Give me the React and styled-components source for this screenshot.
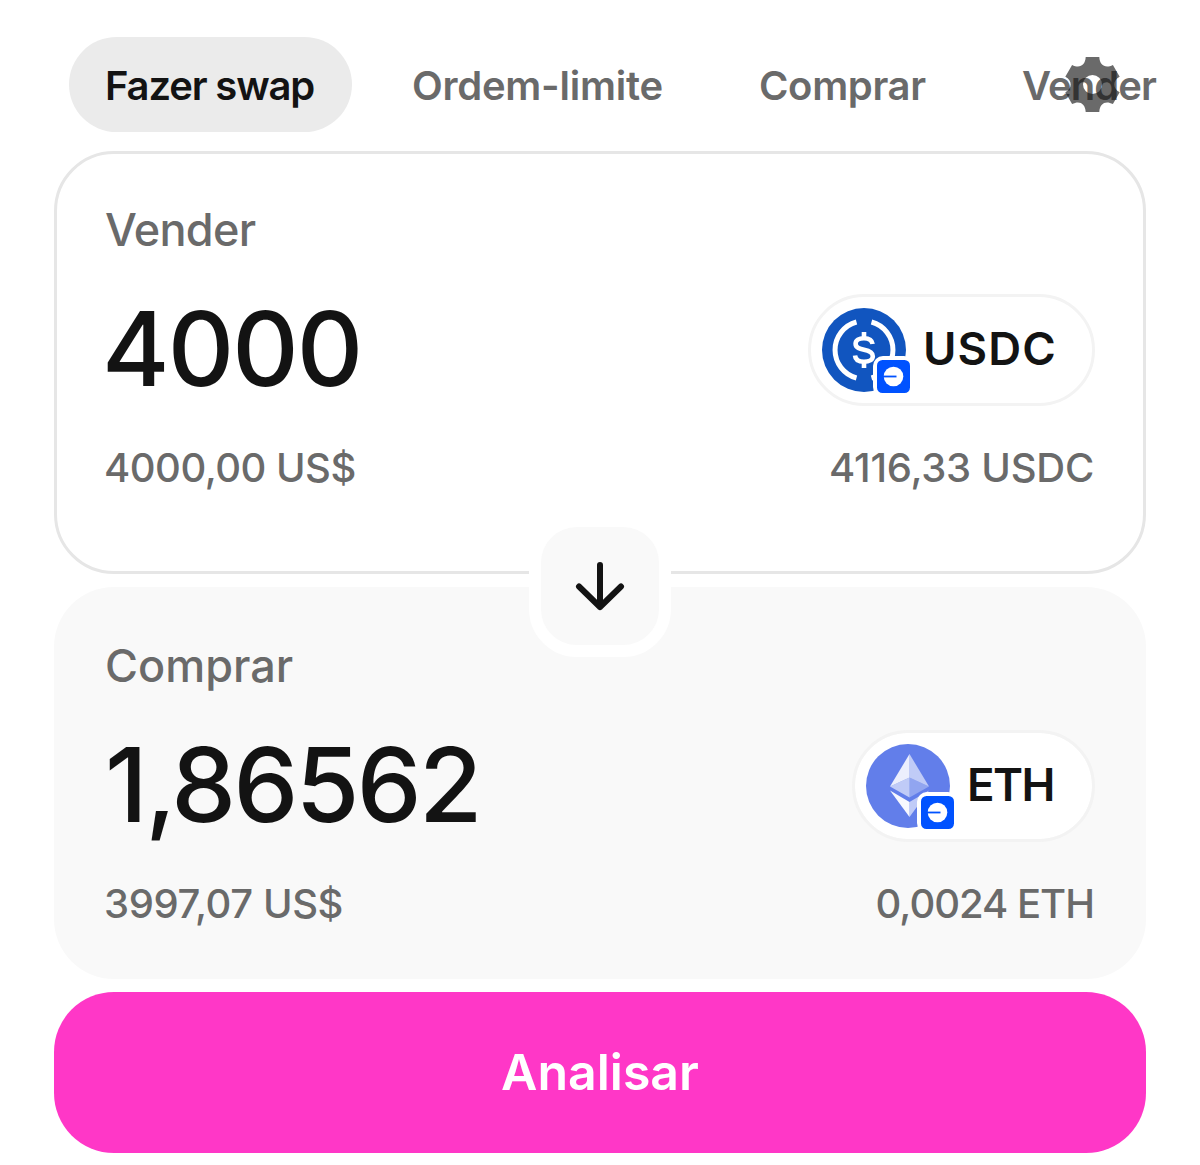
import React, { useState } from 'react';
import styled, { createGlobalStyle } from 'styled-components';

const GlobalStyle = createGlobalStyle`
    * {
        box-sizing: border-box;
    }
    body {
        margin: 0;
        background: #fff;
        overflow: hidden;
        font-family: Inter, 'Liberation Sans', sans-serif;
        color: #131313;
    }
    button {
        font-family: inherit;
        border: 0;
        margin: 0;
        padding: 0;
        cursor: pointer;
    }
`;

const Page = styled.main`
    width: 1200px;
    height: 1165px;
    padding: 37px 54px 0;
    overflow: hidden;
`;

const Header = styled.header`
    position: relative;
    height: 95px;
    margin-bottom: 19px;
`;

const Tabs = styled.nav`
    display: flex;
    gap: 24px;
    padding-left: 15px;
`;

const Tab = styled.button`
    flex: none;
    height: 95px;
    padding: 2px 0 0 36px;
    width: ${props => props.$width}px;
    text-align: left;
    white-space: nowrap;
    border-radius: 48px;
    background: ${props => (props.$active ? '#ebebeb' : 'transparent')};
    color: ${props => (props.$active ? '#131313' : '#6a6a6a')};
    font-size: 40px;
    font-weight: 600;
    letter-spacing: ${props => props.$spacing}px;
`;

//settings sits on top of the last tab
const SettingsButton = styled.button`
    position: absolute;
    top: 19px;
    right: 25px;
    width: 57px;
    height: 57px;
    background: transparent;
    svg {
        display: block;
    }
`;

const Card = styled.section`
    height: ${props => props.$height}px;
    padding: ${props => (props.$outlined ? '48px 48px 0' : '51px 51px 0')};
    border: ${props => (props.$outlined ? '3px solid #e6e6e6' : '0')};
    border-radius: 60px;
    background: ${props => (props.$outlined ? '#fff' : '#f9f9f9')};
`;

const Label = styled.div`
    height: 56px;
    line-height: 56px;
    font-size: 45px;
    font-weight: 450;
    color: #6a6a6a;
    letter-spacing: ${props => props.$spacing}px;
`;

const Row = styled.div`
    display: flex;
    align-items: center;
    justify-content: space-between;
    height: ${props => props.$height}px;
    margin-top: ${props => props.$top}px;
`;

const Amount = styled.div`
    margin-left: ${props => props.$indent}px;
    padding-bottom: 3px;
    font-size: 103px;
    line-height: 109px;
    font-weight: 500;
    letter-spacing: ${props => props.$spacing}px;
`;

const SubText = styled.span`
    font-size: 40px;
    line-height: 48px;
    font-weight: 450;
    color: #6a6a6a;
    white-space: nowrap;
    letter-spacing: ${props => props.$spacing}px;
    &:first-child {
        margin-left: -1px;
    }
    &:last-child {
        margin-right: 1px;
    }
`;

const TokenButton = styled.button`
    display: flex;
    align-items: center;
    gap: 17px;
    width: ${props => props.$width}px;
    height: 112px;
    padding-left: 11px;
    border: 3px solid #f3f3f3;
    border-radius: 56px;
    background: #fff;
    background-clip: padding-box;
    color: #131313;
`;

const Symbol = styled.span`
    padding-bottom: 4px;
    font-size: 45.5px;
    font-weight: 600;
    letter-spacing: ${props => props.$spacing}px;
`;

const TokenIcon = styled.span`
    position: relative;
    width: 84px;
    height: 84px;
    svg {
        display: block;
    }
`;

const NetworkBadge = styled.span`
    position: absolute;
    right: -7.5px;
    bottom: -5px;
    padding: 4px;
    border-radius: 10px;
    background: #fff;
`;

const Divider = styled.div`
    position: relative;
    height: 13px;
`;

const SwitchButton = styled.button`
    position: absolute;
    z-index: 1;
    left: 475px;
    top: -59px;
    display: flex;
    align-items: center;
    justify-content: center;
    width: 142px;
    height: 142px;
    border: 12px solid #fff;
    border-radius: 48px;
    background: #f9f9f9;
`;

const ReviewButton = styled.button`
    display: block;
    width: 100%;
    height: 161px;
    margin-top: 13px;
    padding-bottom: 2px;
    border-radius: 60px;
    background: #ff37c7;
    color: #fff;
    font-size: 50px;
    font-weight: 600;
`;

const GearIcon = () => (
    <svg width="57" height="57" viewBox="-28.5 -28.5 57 57">
        <path
            fill="#131313"
            fillOpacity=".63"
            fillRule="evenodd"
            d="M-6.8-27.5H6.8C7.2-19 13-15.8 20.4-19.6L27.2-7.8C20-4 20 4 27.2 7.8L20.4 19.6C13 15.8 7.2 19 6.8 27.5H-6.8C-7.2 19-13 15.8-20.4 19.6L-27.2 7.8C-20 4-20-4-27.2-7.8L-20.4-19.6C-13-15.8-7.2-19-6.8-27.5ZM0-9.5A9.5 9.5 0 1 0 0 9.5A9.5 9.5 0 1 0 0-9.5Z"
        />
    </svg>
);

const ArrowDown = () => (
    <svg width="50" height="50" viewBox="0 0 50 50" fill="none" stroke="#131313" strokeWidth="6" strokeLinecap="round" strokeLinejoin="round">
        <path d="M25 4V46M4 25.5L25 46L46 25.5" />
    </svg>
);

const BaseIcon = () => (
    <svg width="33" height="33" viewBox="0 0 33 33">
        <rect width="33" height="33" rx="5.5" fill="#0052ff" />
        <circle cx="16.5" cy="16.5" r="9.8" fill="#fff" />
        <path d="M6 16.5H19.5" stroke="#0052ff" strokeWidth="1.8" />
    </svg>
);

const UsdcIcon = () => (
    <svg width="84" height="84" viewBox="-42 -42 84 84">
        <circle r="42" fill="#1155bf" />
        <g fill="none" stroke="#fff">
            <path strokeWidth="5" d="M-7.5-28A29 29 0 0 0-7.5 28M7.5-28A29 29 0 0 1 7.5 28" />
            <path strokeWidth="4.6" d="M8.6-6C8-10 4.6-11.8 0-11.8C-5-11.8-8.4-9.6-8.4-6.2C-8.4-2-4-1 0-.2C5 .8 8.8 2.2 8.8 6.2C8.8 9.8 5 11.8 0 11.8C-5 11.8-8.6 9.8-9 5.5" />
            <path strokeWidth="4.6" d="M0-18V-11M0 11V18" />
        </g>
    </svg>
);

const EthIcon = () => (
    <svg width="84" height="84" viewBox="-42 -42 84 84">
        <circle r="42" fill="#627eea" />
        <g fill="#fff">
            <path fillOpacity=".88" d="M1.5-32V-8.5L-18 .5Z" />
            <path fillOpacity=".6" d="M1.5-32V-8.5L21 .5Z" />
            <path fillOpacity=".6" d="M1.5-8.5V11.5L-18 .5Z" />
            <path fillOpacity=".3" d="M1.5-8.5V11.5L21 .5Z" />
            <path fillOpacity=".95" d="M-18 4.5L1.5 16V31Z" />
            <path fillOpacity=".6" d="M21 4.5L1.5 16V31Z" />
        </g>
    </svg>
);

const Token = ({ icon, symbol, width, spacing }) => (
    <TokenButton $width={width}>
        <TokenIcon>
            {icon}
            <NetworkBadge><BaseIcon /></NetworkBadge>
        </TokenIcon>
        <Symbol $spacing={spacing}>{symbol}</Symbol>
    </TokenButton>
);

const tabs = [
    { name: 'Fazer swap', width: 283, spacing: -1.15 },
    { name: 'Ordem-limite', width: 323, spacing: -0.25 },
    { name: 'Comprar', width: 239, spacing: -0.35 },
    { name: 'Vender', width: 207, spacing: -0.9 },
];

const App = () => {
    const [active, setActive] = useState('Fazer swap');

    return (
        <Page>
            <GlobalStyle />
            <Header>
                <Tabs>
                    {tabs.map(tab => (
                        <Tab
                            key={tab.name}
                            $active={active === tab.name}
                            $width={tab.width}
                            $spacing={tab.spacing}
                            onClick={() => setActive(tab.name)}
                        >
                            {tab.name}
                        </Tab>
                    ))}
                </Tabs>
                <SettingsButton aria-label="Configurações"><GearIcon /></SettingsButton>
            </Header>

            <Card $outlined $height={423}>
                <Label $spacing={-0.7}>Vender</Label>
                <Row $top={36} $height={112}>
                    <Amount $indent={-3} $spacing={-1.9}>4000</Amount>
                    <Token icon={<UsdcIcon />} symbol="USDC" width={287} spacing={1.1} />
                </Row>
                <Row $top={38} $height={48}>
                    <SubText $spacing={-0.5}>4000,00 US$</SubText>
                    <SubText $spacing={-0.25}>4116,33 USDC</SubText>
                </Row>
            </Card>

            <Divider>
                <SwitchButton aria-label="Inverter"><ArrowDown /></SwitchButton>
            </Divider>

            <Card $height={392}>
                <Label $spacing={0}>Comprar</Label>
                <Row $top={36} $height={112}>
                    <Amount $indent={0} $spacing={-2.6}>1,86562</Amount>
                    <Token icon={<EthIcon />} symbol="ETH" width={243} spacing={-1.6} />
                </Row>
                <Row $top={38} $height={48}>
                    <SubText $spacing={-0.4}>3997,07 US$</SubText>
                    <SubText $spacing={-1}>0,0024 ETH</SubText>
                </Row>
            </Card>

            <ReviewButton>Analisar</ReviewButton>
        </Page>
    );
};

export default App;
